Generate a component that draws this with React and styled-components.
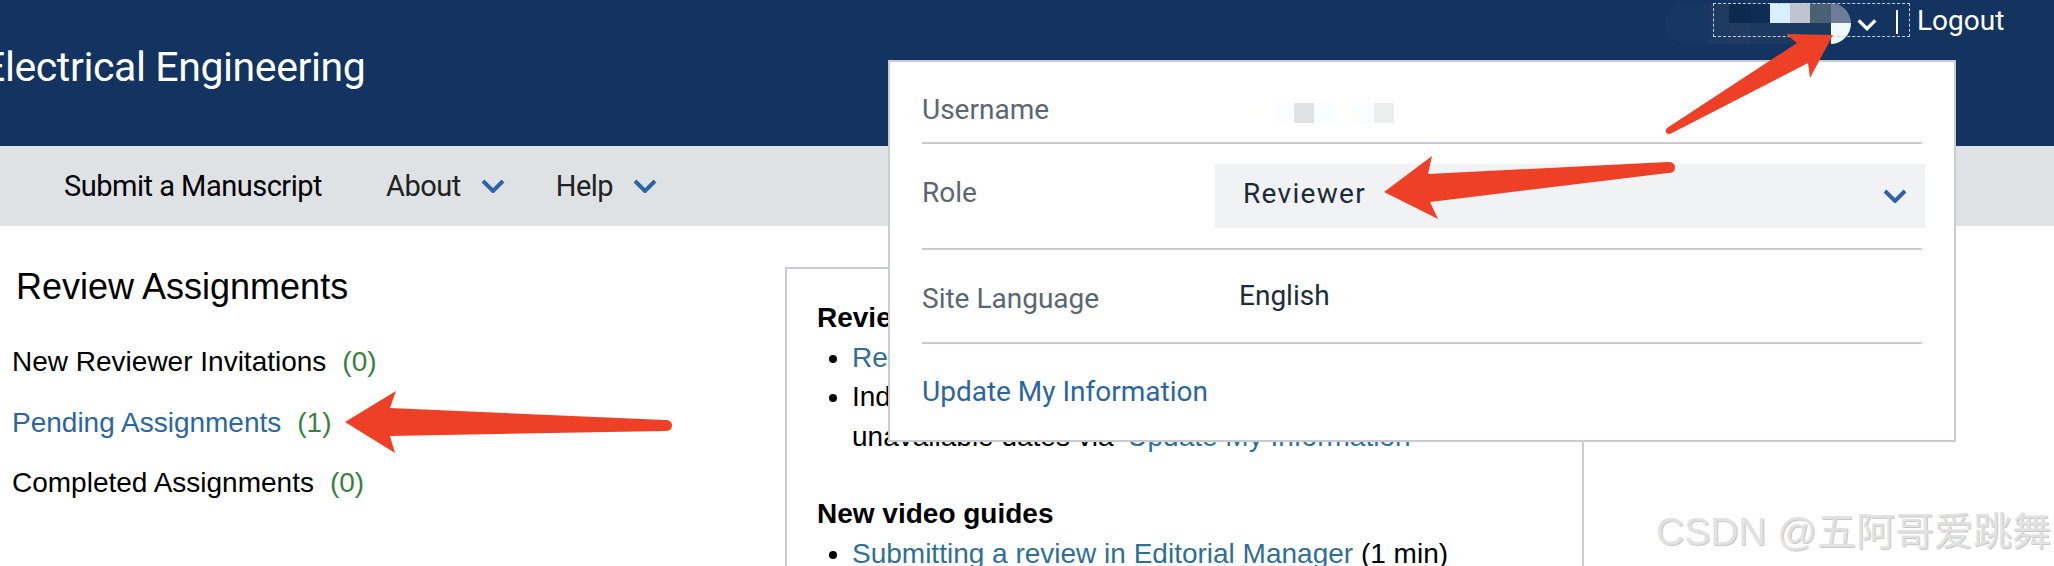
import React from 'react';
import styled, { createGlobalStyle } from 'styled-components';

const GlobalStyle = createGlobalStyle`
  html, body {
    margin: 0;
    padding: 0;
    height: 566px;
    overflow: hidden;
    background: #fff;
    font-family: 'Liberation Sans', Arial, sans-serif;
  }
`;

const Page = styled.div`
  position: relative;
  width: 2054px;
  height: 566px;
  overflow: hidden;
`;

const Header = styled.header`
  display: flex;
  align-items: center;
  height: 146px;
  background: #133360;
`;

const Title = styled.div`
  margin: 0 0 13px -18px;
  font: 400 41px 'Roboto', sans-serif;
  letter-spacing: -0.4px;
  color: #fff;
`;

const UserMenu = styled.div`
  position: absolute;
  top: 3px;
  left: 1665px;
  display: flex;
  align-items: flex-start;
  height: 41px;
`;

const Avatar = styled.div`
  display: flex;
  justify-content: flex-end;
  width: 186px;
  height: 41px;
  overflow: hidden;
  border-radius: 21px;
  background: #163663;
`;

const MosaicGrid = styled.div`
  display: grid;
  grid-template-columns: repeat(${p => p.$cols}, ${p => p.$size}px);
  grid-auto-rows: ${p => p.$size}px;
  margin: ${p => p.$margin || 0};
`;

const Cell = styled.div`
  background: ${p => p.$color};
`;

const MenuBox = styled.div`
  position: absolute;
  left: 48px;
  top: 0;
  width: 197px;
  height: 34px;
  border: 1px dashed #c7d0dc;
  box-sizing: border-box;
`;

const MenuChevron = styled.svg`
  position: absolute;
  left: 192px;
  top: 15px;
  width: 20px;
  height: 13px;
`;

const Separator = styled.div`
  position: absolute;
  left: 231px;
  top: 7px;
  width: 2px;
  height: 24px;
  background: #fff;
`;

const Logout = styled.a`
  position: absolute;
  left: 252px;
  top: 1px;
  font: 400 28px/34px 'Roboto', sans-serif;
  color: #fff;
`;

const NavBar = styled.nav`
  display: flex;
  align-items: center;
  height: 80px;
  padding-left: 64px;
  background: #dfe2e5;
`;

const NavItem = styled.div`
  display: flex;
  align-items: center;
  gap: 20px;
  margin-right: ${p => p.$gap}px;
  font: 400 29px 'Roboto', sans-serif;
  letter-spacing: -0.5px;
  color: ${p => (p.$dark ? '#000' : '#222')};
`;

const Chevron = styled.svg`
  width: 24px;
  height: 14px;
  flex: none;
`;

const Main = styled.main`
  display: flex;
  align-items: flex-start;
`;

const Sidebar = styled.aside`
  width: 785px;
  flex: none;
  padding: 40px 0 0 12px;
  box-sizing: border-box;
`;

const SideTitle = styled.h2`
  margin: 0 0 34px 4px;
  font: 400 36px/42px 'Liberation Sans', Arial, sans-serif;
  color: #000;
`;

const SideItem = styled.div`
  display: flex;
  gap: 16px;
  height: 60.5px;
  font: 400 28px/40px 'Liberation Sans', Arial, sans-serif;
  color: ${p => (p.$active ? '#2b65a5' : '#000')};
`;

const Count = styled.span`
  color: #3b8043;
`;

const InfoCard = styled.section`
  width: 799px;
  height: 340px;
  margin-top: 41px;
  padding: 29px 30px 0;
  box-sizing: border-box;
  border: 2px solid #c8ccd2;
  border-bottom: none;
  font: 400 28px/39.5px 'Liberation Sans', Arial, sans-serif;
  color: #000;
`;

const CardHeading = styled.div`
  font-weight: 700;
`;

const CardList = styled.ul`
  margin: 0 0 38px;
  padding: 0 0 0 35px;
`;

const CardLink = styled.a`
  margin-left: ${p => p.$indent || 0}px;
  color: #2f6f96;
`;

const Panel = styled.div`
  position: absolute;
  left: 888px;
  top: 60px;
  width: 1068px;
  height: 382px;
  padding: 0 32px;
  box-sizing: border-box;
  border: 2px solid #c8ccd2;
  background: #fff;
  font: 400 28px 'Roboto', sans-serif;
`;

const PanelRow = styled.div`
  display: flex;
  align-items: center;
  height: ${p => p.$h}px;
  box-sizing: border-box;
  border-bottom: 2px solid #c8ccd2;
`;

const Label = styled.div`
  width: 293px;
  flex: none;
  margin-top: ${p => p.$shift || 0}px;
  color: #5a6672;
`;

const Value = styled.div`
  padding-left: 24px;
  margin-top: -2px;
  color: #1c2b3a;
`;

const RoleSelect = styled.div`
  display: flex;
  align-items: center;
  justify-content: space-between;
  flex: 1;
  height: 64px;
  margin-right: -3px;
  padding: 0 18px 0 28px;
  background: #f1f2f4;
  color: #1c2b3a;
  letter-spacing: 1.3px;
`;

const SelectText = styled.span`
  margin-top: -6px;
`;

const UpdateLink = styled.a`
  display: block;
  margin-top: 31px;
  color: #2b65a5;
`;

const Annotations = styled.svg`
  position: absolute;
  left: 0;
  top: 0;
  width: 2054px;
  height: 566px;
  pointer-events: none;
`;

const Watermark = styled.div`
  position: absolute;
  left: 1656px;
  top: 508px;
  font: 400 39px/48px 'Liberation Sans', 'Noto Sans CJK SC', sans-serif;
  white-space: nowrap;
  color: #e2e2e2;
  text-shadow: 1px 1px 0 #c8c8c8;
`;

const avatarCells = [
  '#1e3a5c', '#0b2a4e', '#0e2c55', '#d8f0fe', '#bfc4cf', '#486274', '#6d7d97',
  '#1b3b62', '#213c60', '#1c3a60', '#1c3a60', '#1c3a60', '#1c3a60', '#eefafe',
];

const nameCells = ['#fffffb', '#fbfefe', '#dfe3e8', '#f5ffff', '#fffffb', '#f8fdfd', '#edefef'];

const ChevronPath = ({ color }) => (
  <polyline points="2,2 12,12 22,2" fill="none" stroke={color} strokeWidth="4" />
);

const Arrow = ({ d }) => <path d={d} fill="#ee4027" />;

export default function App() {
  return (
    <Page>
      <GlobalStyle />
      <Header>
        <Title>Electrical Engineering</Title>
      </Header>
      <UserMenu>
        <Avatar>
          <MosaicGrid $cols={7} $size={20.3}>
            {avatarCells.map((c, i) => <Cell key={i} $color={c} />)}
          </MosaicGrid>
        </Avatar>
        <MenuBox />
        <MenuChevron viewBox="0 0 24 14"><ChevronPath color="#fff" /></MenuChevron>
        <Separator />
        <Logout>Logout</Logout>
      </UserMenu>
      <NavBar>
        <NavItem $dark $gap={64}>Submit a Manuscript</NavItem>
        <NavItem $gap={51}>
          About
          <Chevron viewBox="0 0 24 14"><ChevronPath color="#2b65a5" /></Chevron>
        </NavItem>
        <NavItem>
          Help
          <Chevron viewBox="0 0 24 14"><ChevronPath color="#2b65a5" /></Chevron>
        </NavItem>
      </NavBar>
      <Main>
        <Sidebar>
          <SideTitle>Review Assignments</SideTitle>
          <SideItem>New Reviewer Invitations <Count>(0)</Count></SideItem>
          <SideItem $active>Pending Assignments <Count>(1)</Count></SideItem>
          <SideItem>Completed Assignments <Count>(0)</Count></SideItem>
        </Sidebar>
        <InfoCard>
          <CardHeading>Reviewer Resources</CardHeading>
          <CardList>
            <li><CardLink>Reviewer Guidelines</CardLink></li>
            <li>
              Indicate your availability and set your
              <br />
              unavailable dates via <CardLink $indent={6}>Update My Information</CardLink>
            </li>
          </CardList>
          <CardHeading>New video guides</CardHeading>
          <CardList>
            <li><CardLink>Submitting a review in Editorial Manager</CardLink> (1 min)</li>
          </CardList>
        </InfoCard>
      </Main>
      <Panel>
        <PanelRow $h={82}>
          <Label $shift={14}>Username</Label>
          <MosaicGrid $cols={7} $size={20} $margin="22px 0 0 39px">
            {nameCells.map((c, i) => <Cell key={i} $color={c} />)}
          </MosaicGrid>
        </PanelRow>
        <PanelRow $h={106}>
          <Label $shift={-8}>Role</Label>
          <RoleSelect>
            <SelectText>Reviewer</SelectText>
            <Chevron viewBox="0 0 24 14"><ChevronPath color="#2b65a5" /></Chevron>
          </RoleSelect>
        </PanelRow>
        <PanelRow $h={94}>
          <Label $shift={5}>Site Language</Label>
          <Value>English</Value>
        </PanelRow>
        <UpdateLink>Update My Information</UpdateLink>
      </Panel>
      <Annotations viewBox="0 0 2054 566">
        <Arrow d="M1833 35 L1786 34 L1797 43 L1667 128 Q1664 132 1668 134 Q1670 134 1672 133 L1808 63 L1810 78 Z" />
        <Arrow d="M1384 192 L1432 156 L1428 174 L1668 162 Q1675 162 1675 167.500 Q1675 173 1668 173 L1430 202 L1438 219 Z" />
        <Arrow d="M345 422 L396 391 L390 408 L665 420 Q672 420 672 425.500 Q672 431 665 431 L390 436 L395 453 Z" />
      </Annotations>
      <Watermark>CSDN @五阿哥爱跳舞</Watermark>
    </Page>
  );
}
